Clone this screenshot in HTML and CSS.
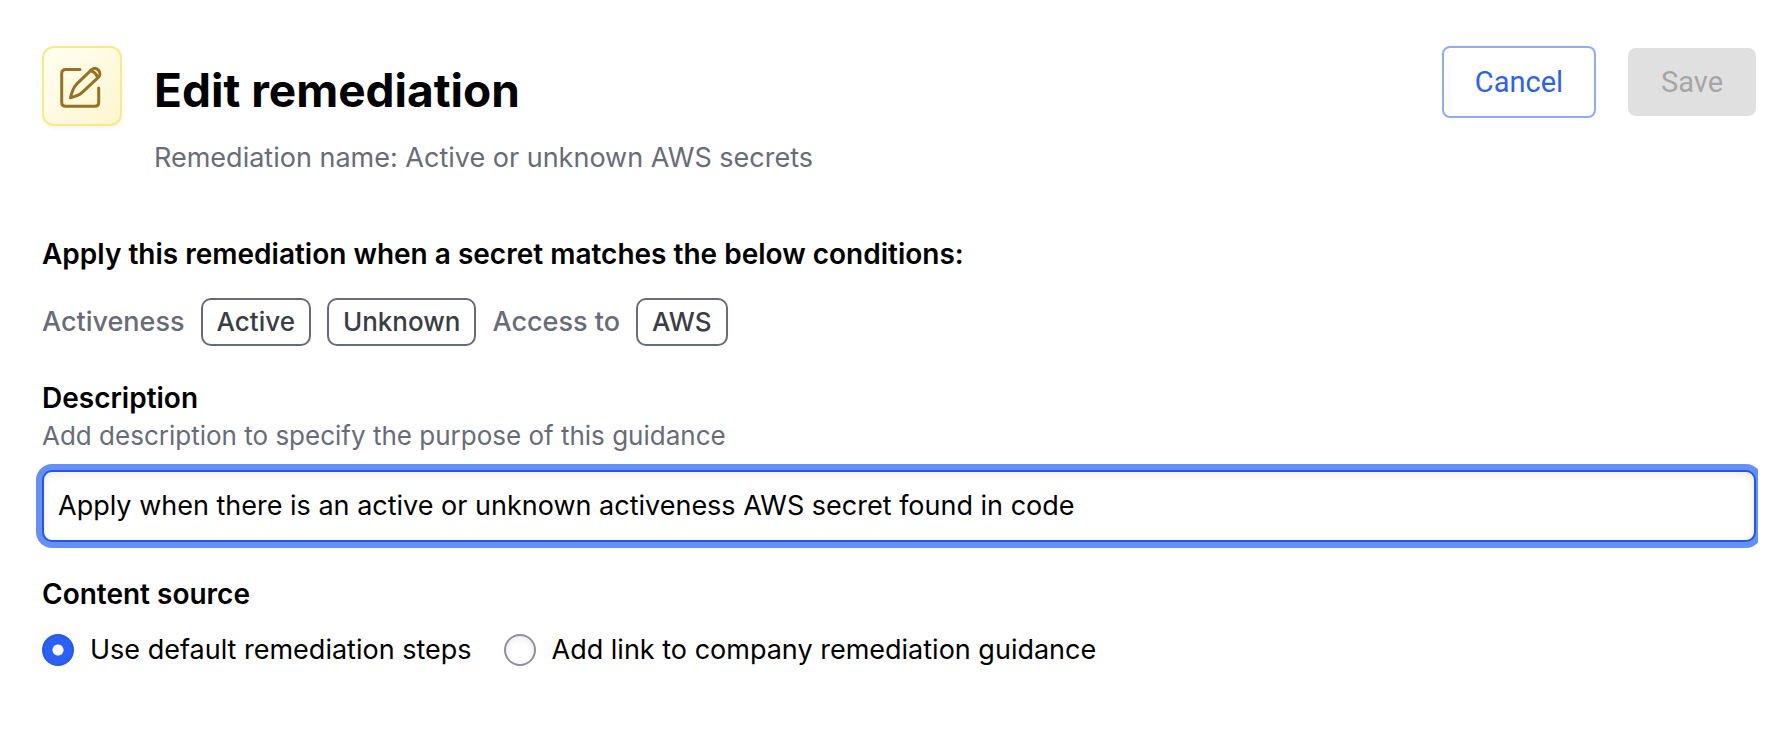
FILE: index.html
```html
<!DOCTYPE html>
<html lang="en">
<head>
<meta charset="utf-8">
<meta name="viewport" content="width=device-width, initial-scale=1">
<title>Edit remediation</title>
<link rel="stylesheet" href="styles.css">
</head>
<body>
<form class="editor">
  <header class="header">
    <div class="header-icon">
      <svg class="edit-icon" viewBox="0 0 44 44" fill="none" stroke="currentColor" stroke-width="3" stroke-linecap="round" stroke-linejoin="round" aria-hidden="true">
        <path d="M20 4.600H5.700Q1.700 4.600 1.700 8.600V37.300Q1.700 41.300 5.700 41.300H34.700Q38.700 41.300 38.700 37.300V23"/>
        <path d="M31.700 4.600L16.500 19.200Q12.500 23.500 10.500 32.700Q18.500 31 22.500 27.200L38.800 11.800A5.100 5.100 0 0 0 31.700 4.600Z"/>
        <path d="M30.500 5.800Q35.500 7 37.300 12"/>
      </svg>
    </div>
    <div class="header-text">
      <h1 class="title">Edit remediation</h1>
      <p class="subtitle">Remediation name: Active or unknown AWS secrets</p>
    </div>
    <div class="actions">
      <button class="button button-cancel" type="button">Cancel</button>
      <button class="button button-save" type="submit" disabled>Save</button>
    </div>
  </header>
  <section class="conditions">
    <h2 class="heading">Apply this remediation when a secret matches the below conditions:</h2>
    <div class="tags">
      <span class="tag-label">Activeness</span>
      <span class="tag">Active</span>
      <span class="tag">Unknown</span>
      <span class="tag-label">Access to</span>
      <span class="tag">AWS</span>
    </div>
  </section>
  <section class="field">
    <label class="heading" for="description">Description</label>
    <p class="hint" id="description-hint">Add description to specify the purpose of this guidance</p>
    <input class="text-input" id="description" type="text" aria-describedby="description-hint" value="Apply when there is an active or unknown activeness AWS secret found in code">
  </section>
  <fieldset class="source">
    <legend class="heading">Content source</legend>
    <div class="options">
      <label class="option"><input class="radio" type="radio" name="source" checked>Use default remediation steps</label>
      <label class="option"><input class="radio" type="radio" name="source">Add link to company remediation guidance</label>
    </div>
  </fieldset>
</form>
</body>
</html>
```
FILE: styles.css
```css
* { box-sizing: border-box; }

body {
  margin: 0;
  background: #fff;
  color: #000;
  font: 27px/40px Inter, "Liberation Sans", sans-serif;
}

h1, h2, p { margin: 0; }

.editor {
  margin-right: 12px;
  padding: 46px 2px 64px 42px;
  overflow: hidden;
}

.header {
  display: flex;
  align-items: flex-start;
  gap: 32px;
}

.header-icon {
  display: flex;
  flex: none;
  align-items: center;
  justify-content: center;
  width: 80px;
  height: 80px;
  padding: 2px 0 0 0;
  border: 2px solid #fbe983;
  border-radius: 12px;
  background: linear-gradient(135deg, #fffef2, #fdf6cf);
  box-shadow: 0 2px 4px #0000000d;
  color: #977122;
}

.edit-icon {
  width: 44px;
  height: 44px;
}

.header-text {
  flex: 1;
  padding-top: 12px;
}

.title {
  font-size: 46px;
  font-weight: 700;
  line-height: 64px;
}

.subtitle {
  margin-top: 16px;
  color: #686c78;
}

.actions {
  display: flex;
  align-items: center;
  gap: 32px;
}

.button {
  min-width: 128px;
  padding: 14px 24px;
  border: 0;
  border-radius: 8px;
  font: 29px/40px Roboto, sans-serif;
}

.button-cancel {
  min-width: 154px;
  border: 2px solid #91abfb;
  background: #fff;
  color: #2b5ff7;
}

.button-save {
  background: #e0e0e0;
  color: #a6a6a6;
}

.conditions { margin-top: 56px; }

.heading {
  display: block;
  padding: 0;
  font-size: 28px;
  font-weight: 600;
  line-height: 40px;
}

.tags {
  display: flex;
  flex-wrap: wrap;
  align-items: center;
  gap: 16px;
  margin-top: 24px;
}

.tag-label {
  color: #686c78;
  font-weight: 500;
}

.tag {
  padding: 2px 14px;
  border: 2px solid #686c78;
  border-radius: 10px;
  color: #3b3d45;
  font-size: 26px;
  font-weight: 500;
}

.field { margin-top: 32px; }

.hint {
  color: #686c78;
  font-size: 26px;
  line-height: 36px;
}

.text-input {
  display: block;
  width: 100%;
  margin-top: 16px;
  padding: 14px;
  border: 2px solid #2257e6;
  border-radius: 10px;
  outline: 0;
  background: #fff;
  box-shadow: 0 0 0 6px #6690f9, inset 0 2px 8px #00000018;
  color: #000;
  font: inherit;
}

.source {
  min-width: 0;
  margin: 32px 0 0;
  padding: 0;
  border: 0;
}

.options {
  display: flex;
  flex-wrap: wrap;
  gap: 32px;
  margin-top: 16px;
}

.option {
  display: flex;
  align-items: center;
  gap: 16px;
}

.radio {
  flex: none;
  width: 32px;
  height: 32px;
  margin: 0;
  border: 2px solid #8f8f9f;
  border-radius: 50%;
  appearance: none;
  background: #fff;
  box-shadow: inset 0 2px 6px #00000018;
}

.radio:checked {
  border-color: #2459ec;
  background: radial-gradient(circle, #fff 5px, #2b60f8 6px);
  box-shadow: none;
}
```
